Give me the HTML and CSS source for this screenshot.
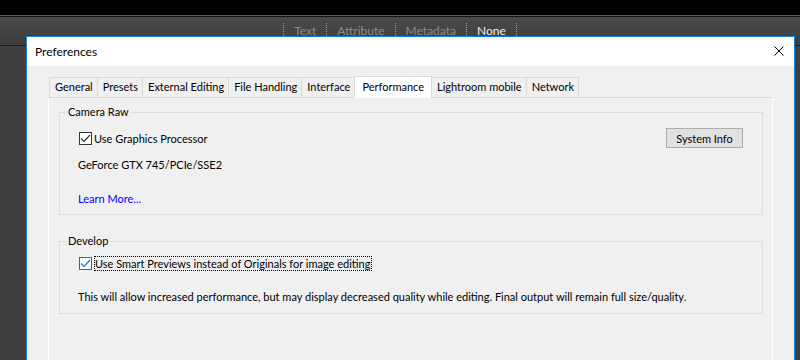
FILE: index.html
```html
<!DOCTYPE html>
<html lang="en">
<head>
  <meta charset="UTF-8" />
  <meta name="viewport" content="width=device-width, initial-scale=1.0"/>
  <title>Preferences</title>
  <link rel="stylesheet" href="styles.css">
</head>
<body>

  <div class="app">
    <div class="top-strip"></div>
    <div class="filter-bar">
      <span class="sep"></span>
      <span class="filter">Text</span>
      <span class="sep"></span>
      <span class="filter">Attribute</span>
      <span class="sep"></span>
      <span class="filter">Metadata</span>
      <span class="sep"></span>
      <span class="filter active">None</span>
      <span class="sep"></span>
    </div>
  </div>

  <div class="dialog">
    <div class="title-bar">
      <span class="title">Preferences</span>
      <svg class="close" width="10" height="10" viewBox="0 0 10 10">
        <path d="M0.5 0.5 L9.5 9.5 M9.5 0.5 L0.5 9.5" stroke="#000" stroke-width="1" fill="none"/>
      </svg>
    </div>

    <div class="dialog-body">
      <div class="tabs">
        <div class="tab">General</div>
        <div class="tab">Presets</div>
        <div class="tab">External Editing</div>
        <div class="tab">File Handling</div>
        <div class="tab">Interface</div>
        <div class="tab active">Performance</div>
        <div class="tab">Lightroom mobile</div>
        <div class="tab">Network</div>
      </div>

      <div class="panel">
        <fieldset class="group">
          <legend>Camera Raw</legend>
          <div class="row">
            <label class="check">
              <span class="box">
                <svg width="11" height="11" viewBox="0 0 11 11">
                  <path d="M1 5.5 L4 8.5 L10 2" stroke="#333" stroke-width="1.2" fill="none"/>
                </svg>
              </span>
              <span>Use Graphics Processor</span>
            </label>
            <button class="btn">System Info</button>
          </div>
          <div class="gpu">GeForce GTX 745/PCIe/SSE2</div>
          <div class="learn">Learn More...</div>
        </fieldset>

        <fieldset class="group develop">
          <legend>Develop</legend>
          <div class="row">
            <label class="check focused">
              <span class="box">
                <svg width="11" height="11" viewBox="0 0 11 11">
                  <path d="M1 5.5 L4 8.5 L10 2" stroke="#0078d7" stroke-width="1.2" fill="none"/>
                </svg>
              </span>
              <span class="focus-text">Use Smart Previews instead of Originals for image editing</span>
            </label>
          </div>
          <div class="note">This will allow increased performance, but may display decreased quality while editing. Final output will remain full size/quality.</div>
        </fieldset>
      </div>
    </div>
  </div>

</body>
</html>
```

FILE: styles.css
```css
body {
  margin: 0;
  background-color: #3f3f3f;
  font-family: Lato, "Liberation Sans", sans-serif;
  font-size: 11px;
  color: #000;
  overflow: hidden;
}

/* Lightroom behind the dialog */
.top-strip {
  height: 15px;
  background-color: #000;
  border-bottom: 1px solid #5a5a5a;
}
.filter-bar {
  height: 30px;
  box-sizing: border-box;
  border-top: 1px solid #121212;
  border-bottom: 1px solid #1c1c1c;
  box-shadow: 0 1px 0 #555;
  background: linear-gradient(#4a4a4a, #3c3c3c);
  display: flex;
  justify-content: center;
  align-items: flex-start;
  padding-top: 6px;
}
.filter {
  padding: 0 10px;
  line-height: 15px;
  font-size: 12px;
  color: #8c8c8c;
}
.filter.active {
  color: #ececec;
}
.sep {
  width: 0;
  height: 15px;
  border-left: 1px dotted #9a9a9a;
}

/* dialog */
.dialog {
  position: absolute;
  left: 26px;
  top: 36px;
  width: 767px;
  height: 340px;
  border: 1px solid #1883d7;
  background-color: #f0f0f0;
}
.title-bar {
  height: 29px;
  background-color: #fff;
  display: flex;
  justify-content: space-between;
  align-items: center;
  padding: 0 10px 0 8px;
}
.title {
  font-size: 12px;
}
.close {
  margin-top: -1px;
}
.dialog-body {
  padding: 10px 21px 0;
}

/* tabs */
.tabs {
  display: flex;
  align-items: flex-end;
  height: 21px;
  padding-left: 1px;
  position: relative;
  z-index: 1;
}
.tab {
  height: 20px;
  box-sizing: border-box;
  border: 1px solid #d9d9d9;
  border-bottom: none;
  margin-right: -1px;
  padding: 0 4px 0 5px;
  line-height: 18px;
  background-color: #f0f0f0;
  white-space: nowrap;
}
.tab.active {
  height: 22px;
  margin-bottom: -1px;
  padding: 0 7px;
  line-height: 19px;
  background-color: #fff;
  position: relative;
}
.panel {
  height: 260px;
  border: 1px solid #fff;
  border-top-color: #d9d9d9;
  padding: 7px 9px 0 10px;
}

/* group boxes */
.group {
  margin: 0;
  padding: 0 19px 6px 18px;
  border: 1px solid #dcdcdc;
  min-width: 0;
}
.group legend {
  margin-left: -12px;
  padding: 0 2px;
  line-height: 14px;
}
.develop {
  margin-top: 19px;
  padding-bottom: 7px;
}
.row {
  display: flex;
  justify-content: space-between;
  align-items: center;
  height: 18px;
  margin-top: 10px;
}
.develop .row {
  margin-top: 6px;
}
.check {
  display: flex;
  align-items: center;
}
.box {
  width: 11px;
  height: 11px;
  margin-left: 1px;
  margin-right: 2px;
  border: 1px solid #333;
  background-color: #fff;
}
.box svg {
  display: block;
}
.focused .box {
  border-color: #0078d7;
}
.focus-text {
  border: 1px dotted #000;
  line-height: 13px;
  padding: 0 1px 0 0;
}
.btn {
  width: 77px;
  height: 20px;
  padding: 0;
  border: 1px solid #adadad;
  background-color: #e1e1e1;
  font-family: inherit;
  font-size: 11px;
  color: #000;
}
.gpu {
  margin-top: 9px;
  line-height: 18px;
}
.learn {
  margin-top: 16px;
  line-height: 18px;
  color: #0000ff;
}
.note {
  margin-top: 16px;
  line-height: 18px;
}
```
